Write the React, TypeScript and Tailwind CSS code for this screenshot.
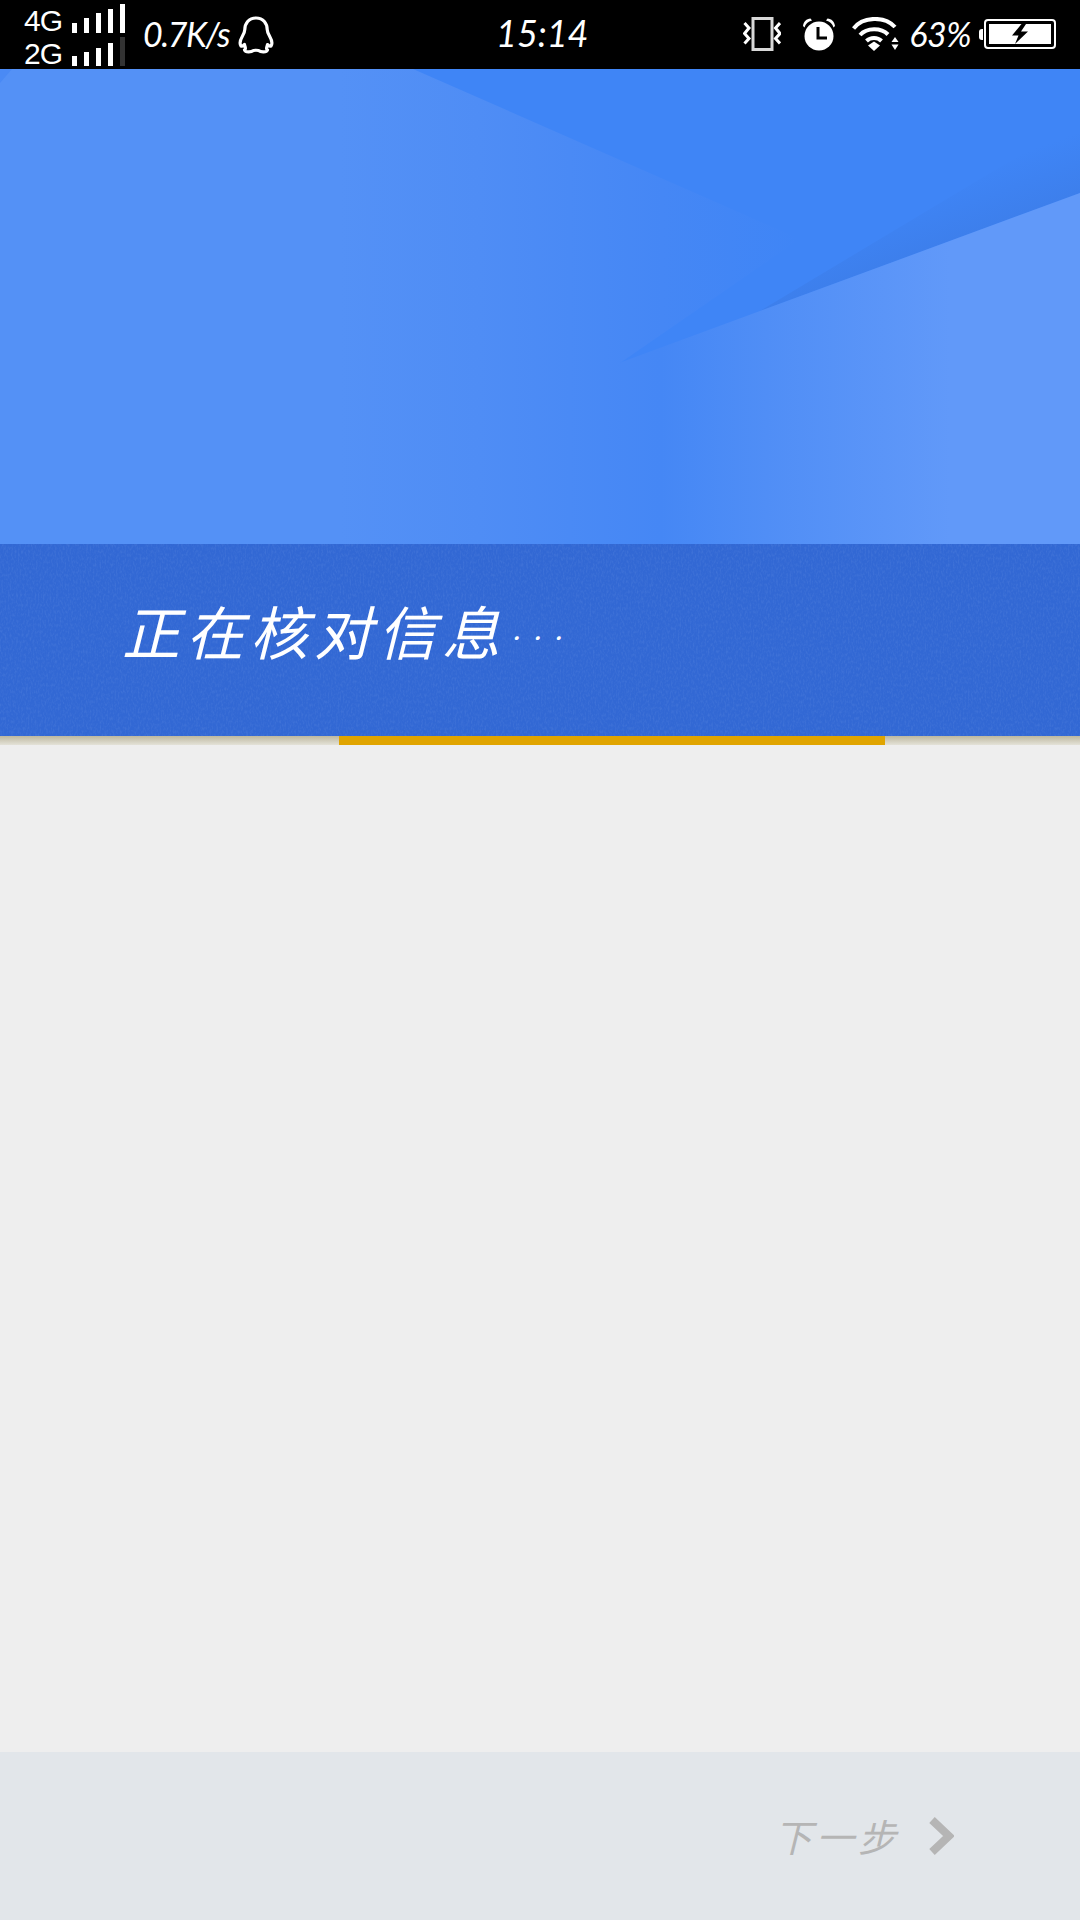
const handFont = "font-['Noto_Sans_CJK_SC','Noto_Sans',sans-serif]"

function SignalRow({ label, bars, lastDim }: { label: string; bars: number[]; lastDim?: boolean }) {
  return (
    <div className="flex h-[29px] items-end">
      <span className="w-[48px] font-['Liberation_Sans',sans-serif] text-[30px] leading-[25px] tracking-[-1px] text-white">{label}</span>
      <div className="flex items-end gap-[7px]">
        {bars.map((h, i) => (
          <div
            key={i}
            className={`w-[5px] ${lastDim && i === bars.length - 1 ? 'bg-[#333333]' : 'bg-white'}`}
            style={{ height: h }}
          />
        ))}
      </div>
    </div>
  )
}

function QQIcon() {
  return (
    <svg width="36" height="38" viewBox="0 0 36 38" fill="none" stroke="white" strokeWidth="3.2" strokeLinejoin="round" aria-hidden="true">
      <path d="M18 2C10.500 2 7 7.500 6.800 13.500C6.700 16 6 17.500 4.500 20C2.500 23.500 1.500 28 3 30C4 30.800 5.500 29.500 6.500 28.500C7 31 8.500 33 6.500 34C7.500 36.500 13 36.500 15.500 34.500C17 34.200 19 34.200 20.500 34.500C23 36.500 28.500 36.500 29.500 34C27.500 33 29 31 29.500 28.500C30.500 29.500 32 30.800 33 30C34.500 28 33.500 23.500 31.500 20C30 17.500 29.300 16 29.200 13.500C29 7.500 25.500 2 18 2Z" />
    </svg>
  )
}

function VibrateIcon() {
  return (
    <svg width="38" height="34" viewBox="0 0 38 34" fill="none" aria-hidden="true">
      <rect x="10" y="1.500" width="19" height="31" stroke="#d8d8d8" strokeWidth="3" />
      <path d="M1.500 6l4.500 5-4.500 5.500 4.500 5-4.500 5" stroke="white" strokeWidth="3" />
      <path d="M37 6l-4.500 5 4.500 5.500-4.500 5 4.500 5" stroke="white" strokeWidth="3" />
    </svg>
  )
}

function AlarmIcon() {
  return (
    <svg width="34" height="34" viewBox="0 0 34 34" aria-hidden="true">
      <circle cx="17" cy="19" r="14.500" fill="white" />
      <path d="M1 9C1.500 4.500 4.500 1.800 8.500 1.500L10 3.500C6 4.500 3.500 7 2.500 10.500Z" fill="white" />
      <path d="M33 9C32.500 4.500 29.500 1.800 25.500 1.500L24 3.500C28 4.500 30.500 7 31.500 10.500Z" fill="white" />
      <path d="M16 10v11h9" fill="none" stroke="black" strokeWidth="3" />
    </svg>
  )
}

function WifiIcon() {
  return (
    <svg width="47" height="34" viewBox="0 0 47 34" aria-hidden="true">
      <path d="M1.500 11.500C11 -1 33 -1 43 10" fill="none" stroke="white" strokeWidth="4" />
      <path d="M8 18C15 10.500 29 10.500 36 17.500" fill="none" stroke="white" strokeWidth="4" />
      <path d="M14.500 24C18.500 20 25.500 20 29.500 24" fill="none" stroke="white" strokeWidth="4" />
      <path d="M16 28.500L22 24.500L28 28.500L22 34Z" fill="white" />
      <path d="M39.500 25L43 20L46.500 25Z" fill="white" />
      <path d="M39.500 27.500H46.500L43 33Z" fill="white" />
    </svg>
  )
}

function BatteryIcon() {
  return (
    <div className="flex items-center">
      <div className="mr-[1px] h-[11px] w-[4px] rounded-l-[3px] bg-white" />
      <div className="flex h-[30px] w-[72px] rounded-[4px] border-[2px] border-white p-[3px]">
        <div className="flex flex-1 items-center justify-center bg-white">
          <svg width="18" height="20" viewBox="0 0 18 20" aria-hidden="true">
            <path d="M10.500 0L1 11.500H7.500L4 20L17 7.500H10L15 0Z" fill="black" />
          </svg>
        </div>
      </div>
    </div>
  )
}

function HeroArt() {
  return (
    <svg className="block" width="1080" height="475" viewBox="0 0 1080 475" aria-hidden="true">
      <defs>
        <linearGradient id="leftFold" gradientUnits="userSpaceOnUse" x1="340" y1="0" x2="800" y2="0">
          <stop offset="0" stopColor="#5491f6" />
          <stop offset="0.3" stopColor="#4f8df5" />
          <stop offset="0.7" stopColor="#4587f5" />
          <stop offset="1" stopColor="#3f85f6" />
        </linearGradient>
        <linearGradient id="rightFold" gradientUnits="userSpaceOnUse" x1="340" y1="0" x2="950" y2="0">
          <stop offset="0" stopColor="#5491f6" />
          <stop offset="0.23" stopColor="#4f8df5" />
          <stop offset="0.525" stopColor="#4587f5" />
          <stop offset="0.7" stopColor="#508ef6" />
          <stop offset="1" stopColor="#6199f9" />
        </linearGradient>
        <linearGradient id="foldShadow" gradientUnits="userSpaceOnUse" x1="1060" y1="70" x2="1080" y2="124">
          <stop offset="0" stopColor="#3a76dd" stopOpacity="0" />
          <stop offset="1" stopColor="#3a76dd" stopOpacity="0.4" />
        </linearGradient>
      </defs>
      <rect width="1080" height="475" fill="#3f85f6" />
      <polygon points="1080,50 1080,124 760,242" fill="url(#foldShadow)" />
      <polygon points="0,0 413,0 800,170 620,294 620,475 0,475" fill="url(#leftFold)" />
      <polygon points="1080,124 600,301 600,475 1080,475" fill="url(#rightFold)" />
      <polygon points="0,0 12,0 0,14" fill="#4a8af5" />
    </svg>
  )
}

function BandNoise() {
  return (
    <svg className="absolute inset-0 h-full w-full opacity-[0.08]" aria-hidden="true">
      <filter id="grain">
        <feTurbulence type="fractalNoise" baseFrequency="0.6 0.3" numOctaves="2" seed="4" />
        <feColorMatrix values="0 0 0 0 0.6 0 0 0 0 0.75 0 0 0 0 1 0 0 0 2.4 -1" />
      </filter>
      <rect width="100%" height="100%" filter="url(#grain)" />
    </svg>
  )
}

export default function App() {
  return (
    <div className={`flex h-[1920px] w-[1080px] flex-col overflow-hidden bg-[#eeeeee] ${handFont}`}>
      <header className="flex h-[69px] flex-none items-start bg-black text-white">
        <div className="flex w-[496px] flex-none items-start pl-[24px]">
          <div className="flex flex-col gap-[4px] pt-[4px]">
            <SignalRow label="4G" bars={[10, 15, 20, 24, 29]} />
            <SignalRow label="2G" bars={[10, 14, 18, 23, 29]} lastDim />
          </div>
          <span className="ml-[18px] mt-[15px] font-['Lato',sans-serif] text-[34px] italic leading-[38px] tracking-[-1.500px]">0.7K/s</span>
          <div className="ml-[9px] mt-[16px]"><QQIcon /></div>
        </div>
        <span className="mt-[13px] font-['Lato',sans-serif] text-[36px] italic leading-[40px]">15:14</span>
        <div className="ml-auto flex items-center pr-[24px] pt-[17px]">
          <VibrateIcon />
          <div className="ml-[21px]"><AlarmIcon /></div>
          <div className="ml-[16px]"><WifiIcon /></div>
          <span className="ml-[10px] font-['Lato',sans-serif] text-[34px] italic leading-[34px] tracking-[-0.500px]">63%</span>
          <div className="ml-[8px]"><BatteryIcon /></div>
        </div>
      </header>

      <div className="flex-none"><HeroArt /></div>

      <section className="relative flex h-[192px] flex-none items-center bg-[#3268d4] pl-[122px]">
        <BandNoise />
        <p className="relative pb-[14px] text-[58px] italic leading-[66px] tracking-[6px] text-white">正在核对信息<span className="align-[10px] text-[18px] tracking-[3px]">···</span></p>
      </section>

      <div className="flex h-[9px] flex-none bg-gradient-to-b from-[#bdb8a0] to-[#e4e2d8]">
        <div className="ml-[339px] h-full w-[546px] bg-[#e0a400]" />
      </div>

      <main className="flex-1" />

      <footer className="flex h-[168px] flex-none items-center justify-end bg-[#e2e6ea] pr-[126px]">
        <span className="text-[38px] italic leading-[40px] tracking-[4px] text-[#b5b5b5]">下一步</span>
        <svg className="ml-[28px]" width="26" height="38" viewBox="0 0 26 38" aria-hidden="true">
          <path d="M4 3L21 19L4 35" fill="none" stroke="#b5b5b5" strokeWidth="8" />
        </svg>
      </footer>
    </div>
  )
}
